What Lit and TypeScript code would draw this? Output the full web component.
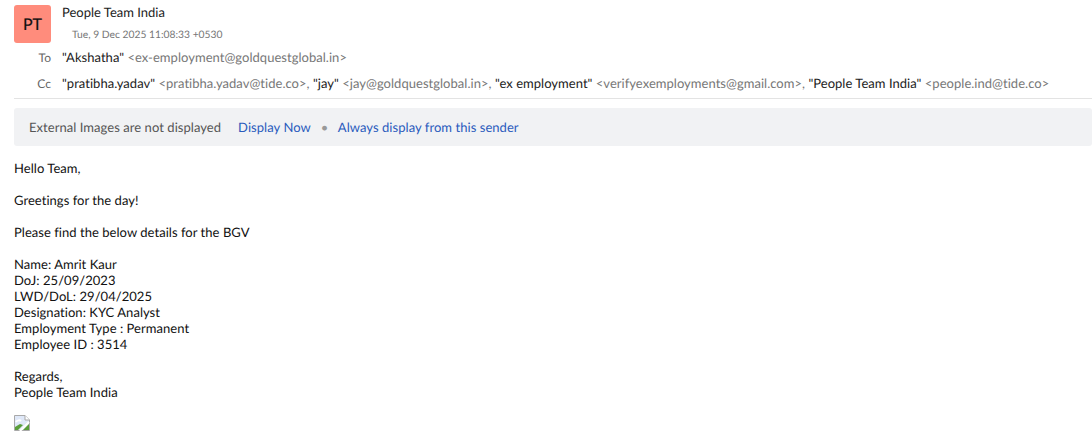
import { LitElement, html, css } from "lit";
import { customElement } from "lit/decorators.js";

@customElement("app-root")
export class AppRoot extends LitElement {
  static styles = css`
    :host { display: block; background: #fff; font-family: Lato, sans-serif; font-size: 13px; color: #000; height: 446px; overflow: hidden; padding: 3px 0 0 14px; box-sizing: border-box; text-rendering: geometricPrecision; }
    .head { display: flex; gap: 11px; height: 39px; }
    .avatar { width: 37px; height: 38px; background: #ff8c7c; border-radius: 3px; display: flex; align-items: center; justify-content: center; font-size: 16px; color: #111; margin-top: 2px; -webkit-text-stroke: 0.2px #111; }
    .sender { line-height: 18px; color: #222; font-size: 13px; }
    .date { font-size: 10.3px; color: #777; line-height: 14px; margin: 7px 0 0 10px; }
    .row { display: flex; height: 26px; align-items: center; font-size: 13px; color: #777; white-space: nowrap; letter-spacing: 0.03px; }
    .lbl { width: 37px; text-align: right; margin-right: 11px; font-size: 12px; color: #666; }
    .n { color: #222; }
    .rows { margin-top: 2px; }
    hr { border: 0; border-top: 1px solid #e3e3e3; margin: 0; margin-top: 2px; }
    .bar { margin-top: 9px; height: 38px; background: #f1f2f4; border-radius: 3px; display: flex; align-items: center; padding-left: 15px; font-size: 13px; color: #555; letter-spacing: 0.05px; }
    .bar a { color: #2a5bbd; }
    .first { margin-left: 17px; }
    .dot { margin: 0 9.500px 0 10px; color: #999; }
    .body { margin-top: 14px; line-height: 16px; font-size: 13px; color: #111; letter-spacing: 0.04px; }
    .sp { height: 16px; }
    svg { display: block; margin-top: 15px; }
  `;
  render() {
    return html`
      <div class="head">
        <div class="avatar">PT</div>
        <div><div class="sender">People Team India</div><div class="date">Tue, 9 Dec 2025 11:08:33 +0530</div></div>
      </div>
      <div class="rows">
        <div class="row"><div class="lbl">To</div><span><span class="n">"Akshatha"</span> &lt;ex-employment@goldquestglobal.in&gt;</span></div>
        <div class="row"><div class="lbl">Cc</div><span><span class="n">"pratibha.yadav"</span> &lt;pratibha.yadav@tide.co&gt;, <span class="n">"jay"</span> &lt;jay@goldquestglobal.in&gt;, <span class="n">"ex employment"</span> &lt;verifyexemployments@gmail.com&gt;, <span class="n">"People Team India"</span> &lt;people.ind@tide.co&gt;</span></div>
      </div>
      <hr />
      <div class="bar"><span>External Images are not displayed</span><a class="first">Display Now</a><span class="dot">•</span><a>Always display from this sender</a></div>
      <div class="body">
        <div>Hello Team,</div><div class="sp"></div>
        <div>Greetings for the day!</div><div class="sp"></div>
        <div>Please find the below details for the BGV</div><div class="sp"></div>
        <div>Name: Amrit Kaur</div><div>DoJ: 25/09/2023</div><div>LWD/DoL: 29/04/2025</div><div>Designation: KYC Analyst</div><div>Employment Type : Permanent</div><div>Employee ID : 3514</div><div class="sp"></div>
        <div>Regards,</div><div>People Team India</div>
        <svg width="16" height="16" viewBox="0 0 16 16">
          <path d="M.5.5H11L15.500 5V15.500H.5Z" fill="#dfe8f8" stroke="#a9a9a9"/>
          <path d="M11 .5V5H15.500" fill="#fff" stroke="#a9a9a9"/>
          <path d="M1 15V12L6 9L9 10L4 15Z" fill="#5a9e3a"/>
          <path d="M2 7C3 5 6 5 7 6" fill="none" stroke="#fff" stroke-width="2"/>
          <path d="M15 7L6 16" stroke="#fff" stroke-width="2"/>
          <path d="M9 15L15 9V15Z" fill="#5a9e3a"/>
        </svg>
      </div>
    `;
  }
}
